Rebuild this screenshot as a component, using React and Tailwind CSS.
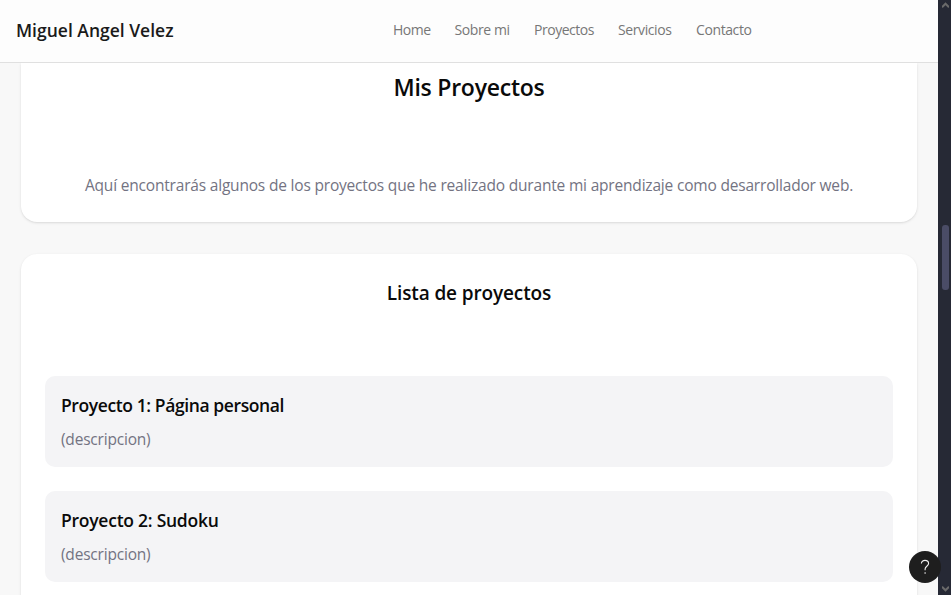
const links = [
  { label: "Home", style: "w-[37.5px] tracking-[-0.45px]" },
  { label: "Sobre mi", style: "w-[55.5px] tracking-[-0.4px]" },
  { label: "Proyectos", style: "w-[60px] tracking-[-0.48px]" },
  { label: "Servicios", style: "w-[54px] tracking-[-0.4px]" },
  { label: "Contacto", style: "w-[56px] tracking-[-0.4px]" },
];

const projects = [
  { title: "Proyecto 1: Página personal", text: "(descripcion)", spacing: "tracking-[-0.4px]" },
  { title: "Proyecto 2: Sudoku", text: "(descripcion)", spacing: "tracking-[-0.25px]" },
];

function Header() {
  return (
    <header className="flex h-[63px] shrink-0 items-center border-b border-[#e0e0e0] bg-[#fdfdfd] pb-[2px] pl-4">
      <div className="w-[377px] whitespace-nowrap text-[17.5px] font-semibold text-[#1a1a1a]">
        Miguel Angel Velez
      </div>
      <nav className="flex gap-6 text-[14px] leading-5 text-[#777777]">
        {links.map((link) => (
          <a key={link.label} href="#" className={`block whitespace-nowrap ${link.style}`}>
            {link.label}
          </a>
        ))}
      </nav>
    </header>
  );
}

function Project({ title, text, spacing }) {
  return (
    <article className="h-[91px] shrink-0 rounded-[10px] bg-[#f4f4f6] px-4 pt-4">
      <h3 className={`text-[17.5px] leading-[27px] font-semibold text-[#0a0a0a] ${spacing}`}>{title}</h3>
      <p className="mt-2 text-[15.5px] leading-6 tracking-[-0.2px] text-[#737382]">{text}</p>
    </article>
  );
}

function Scrollbar() {
  return (
    <div className="flex w-[13px] shrink-0 flex-col items-center bg-[#262935]">
      <svg className="ml-[2px] mt-[2px] h-[7px] w-[7px]" viewBox="0 0 7 7" fill="none" stroke="#6a6a6a" strokeWidth="2">
        <path d="M0 5.2 3.5 1.7 7 5.2" />
      </svg>
      <div className="ml-[2px] mt-[216px] h-[65px] w-[7px] rounded-[3px] bg-[#4a4c66]" />
      <svg className="mb-[3px] ml-[2px] mt-auto h-[7px] w-[7px]" viewBox="0 0 7 7" fill="none" stroke="#6a6a6a" strokeWidth="2">
        <path d="M0 1.8 3.5 5.3 7 1.8" />
      </svg>
    </div>
  );
}

export default function App() {
  return (
    <div className="flex h-[595px] w-[951px] overflow-hidden bg-[#f8f8f8] font-['Open_Sans',sans-serif]">
      <div className="flex min-w-0 flex-1 flex-col overflow-hidden">
        <Header />
        <main className="flex min-h-0 flex-1 flex-col overflow-hidden px-[21px] text-[#0a0a0a]">
          <section className="h-[159px] shrink-0 rounded-b-2xl bg-white pt-[6px] text-center shadow-[0_1px_3px_rgba(0,0,0,0.1),0_1px_2px_-1px_rgba(0,0,0,0.1)]">
            <h1 className="text-[23px] leading-9 font-semibold tracking-[-0.25px]">Mis Proyectos</h1>
            <p className="mt-[68px] whitespace-nowrap text-[15.5px] leading-6 tracking-[-0.19px] text-[#737382]">
              Aquí encontrarás algunos de los proyectos que he realizado durante mi aprendizaje como desarrollador web.
            </p>
          </section>
          <section className="mt-8 flex h-[500px] shrink-0 flex-col rounded-2xl bg-white px-6 pt-6 shadow-[0_1px_3px_rgba(0,0,0,0.1),0_1px_2px_-1px_rgba(0,0,0,0.1)]">
            <h2 className="text-center text-[19px] leading-[30px] font-semibold tracking-[-0.13px]">Lista de proyectos</h2>
            <div className="mt-[68px] flex flex-col gap-6">
              {projects.map((project) => (
                <Project key={project.title} {...project} />
              ))}
            </div>
          </section>
        </main>
      </div>
      <Scrollbar />
      <button
        aria-label="Ayuda"
        className="fixed left-[909px] top-[551px] flex h-8 w-8 items-center justify-center rounded-full bg-[#1e1e1e]"
      >
        <svg className="h-4 w-4" viewBox="0 0 16 16" fill="none" stroke="#f2f2f2" strokeWidth="1.1">
          <path d="M4.4 4.6C4.4 2.6 6 1.4 8 1.4s3.6 1.3 3.6 3.2c0 2.6-3.5 2.8-3.5 5.4v1.2" />
          <circle cx="8.1" cy="14" r=".8" fill="#f2f2f2" stroke="none" />
        </svg>
      </button>
    </div>
  );
}
